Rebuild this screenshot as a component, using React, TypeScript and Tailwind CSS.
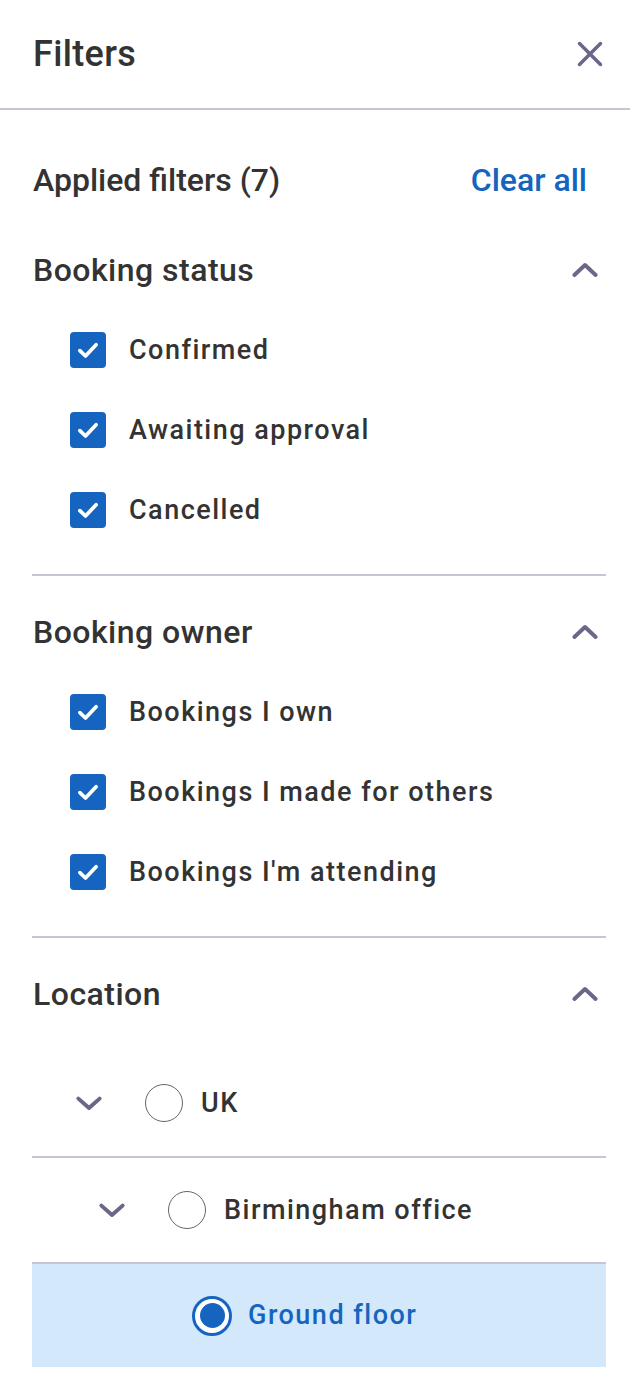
import { useState } from "react";

const font = { fontFamily: "Roboto, 'Noto Sans', sans-serif" };

function ChevronUp() {
  return (
    <svg width="30" height="30" viewBox="0 0 24 24" fill="none" stroke="#6b6788" strokeWidth="3.2" strokeLinecap="round" strokeLinejoin="round">
      <polyline points="3.5,16 12,8 20.5,16" />
    </svg>
  );
}

function ChevronDown() {
  return (
    <svg width="30" height="30" viewBox="0 0 24 24" fill="none" stroke="#6b6788" strokeWidth="3.2" strokeLinecap="round" strokeLinejoin="round">
      <polyline points="3.5,8.5 12,16 20.5,8.5" />
    </svg>
  );
}

function Checkbox({ checked }: { checked: boolean }) {
  return (
    <span className="w-[36px] h-[36px] rounded-[4px] bg-[#1565c0] flex items-center justify-center shrink-0">
      {checked && (
        <svg width="30" height="30" viewBox="0 0 24 24" fill="none" stroke="white" strokeWidth="3" strokeLinecap="round" strokeLinejoin="round">
          <polyline points="5.5,12.5 10,16.8 18.5,7.8" />
        </svg>
      )}
    </span>
  );
}

function Radio({ selected }: { selected?: boolean }) {
  if (selected) {
    return (
      <span className="w-[40px] h-[40px] rounded-full border-[3px] border-[#1565c0] bg-white flex items-center justify-center shrink-0">
        <span className="block w-[25px] h-[25px] rounded-full bg-[#1565c0]" />
      </span>
    );
  }
  return <span className="block w-[38px] h-[38px] rounded-full border-[1.5px] border-[#666] bg-white shrink-0" />;
}

function SectionHeader({ title }: { title: string }) {
  return (
    <div className="h-[40px] flex items-center justify-between">
      <h3 className="text-[32px] font-medium text-[#333] tracking-[0.015em]">{title}</h3>
      <span className="mr-[6px]">
        <ChevronUp />
      </span>
    </div>
  );
}

function CheckItem({ label }: { label: string }) {
  const [checked, setChecked] = useState(true);
  return (
    <label className="h-[80px] flex items-center gap-[23px] pl-[38px] cursor-pointer" onClick={() => setChecked(!checked)}>
      <Checkbox checked={checked} />
      <span className="text-[27px] font-medium text-[#333] tracking-[0.055em]">{label}</span>
    </label>
  );
}

function Divider() {
  return <div className="h-[2px] bg-[#c3c6d4]" />;
}

const statuses = ["Confirmed", "Awaiting approval", "Cancelled"];
const owners = ["Bookings I own", "Bookings I made for others", "Bookings I'm attending"];

export default function App() {
  return (
    <div className="w-[630px] min-h-[1380px] bg-white" style={font}>
      <header className="h-[110px] flex items-center justify-between pl-[33px] pr-[26px] border-b-2 border-[#c3c6d4]">
        <h2 className="text-[36px] font-medium text-[#333] tracking-[0.01em]">Filters</h2>
        <svg width="28" height="28" viewBox="0 0 24 24" fill="none" stroke="#6b6788" strokeWidth="3" strokeLinecap="round">
          <line x1="3" y1="3" x2="21" y2="21" />
          <line x1="21" y1="3" x2="3" y2="21" />
        </svg>
      </header>

      <main className="pl-[32px] pr-[24px]">
        <div className="h-[40px] mt-[50px] flex items-center justify-between pl-[1px]">
          <span className="text-[32px] font-medium text-[#333]">Applied filters (7)</span>
          <button type="button" className="text-[32px] font-medium text-[#1565c0] mr-[19px]">
            Clear all
          </button>
        </div>

        <div className="mt-[50px] pl-[1px]">
          <SectionHeader title="Booking status" />
        </div>
        <div className="mt-[20px]">
          {statuses.map((s) => (
            <CheckItem key={s} label={s} />
          ))}
        </div>
        <div className="mt-[24px]">
          <Divider />
        </div>

        <div className="mt-[36px] pl-[1px]">
          <SectionHeader title="Booking owner" />
        </div>
        <div className="mt-[20px]">
          {owners.map((s) => (
            <CheckItem key={s} label={s} />
          ))}
        </div>
        <div className="mt-[24px]">
          <Divider />
        </div>

        <div className="mt-[36px] pl-[1px]">
          <SectionHeader title="Location" />
        </div>

        <div className="mt-[36px] h-[106px] flex items-center pl-[37px]">
          <span className="w-[40px] flex justify-center">
            <ChevronDown />
          </span>
          <span className="ml-[36px]">
            <Radio />
          </span>
          <span className="ml-[18px] text-[27px] font-medium text-[#333] tracking-[0.055em]">UK</span>
        </div>
        <Divider />
        <div className="h-[104px] flex items-center pl-[60px]">
          <span className="w-[40px] flex justify-center">
            <ChevronDown />
          </span>
          <span className="ml-[36px]">
            <Radio />
          </span>
          <span className="ml-[18px] text-[27px] font-medium text-[#333] tracking-[0.055em]">Birmingham office</span>
        </div>
        <Divider />
        <div className="h-[103px] flex items-center pl-[84px] bg-[#d4e8fc]">
          <span className="w-[40px]" />
          <span className="ml-[36px]">
            <Radio selected />
          </span>
          <span className="ml-[16px] text-[27px] font-medium text-[#1565c0] tracking-[0.055em]">Ground floor</span>
        </div>
      </main>
    </div>
  );
}
